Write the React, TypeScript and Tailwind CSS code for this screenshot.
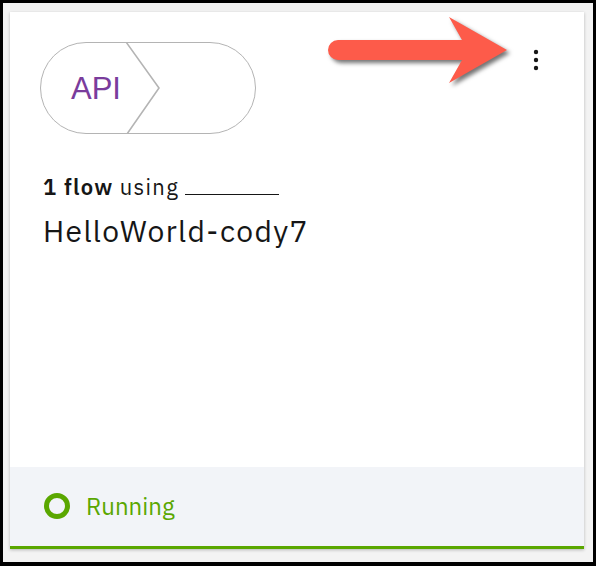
const font = { fontFamily: '"IBM Plex Sans", "Noto Sans", "Open Sans", sans-serif' };

function Kebab() {
  return (
    <svg width="6" height="22" viewBox="0 0 6 22" className="block">
      <circle cx="3" cy="3" r="2.2" fill="#161616" />
      <circle cx="3" cy="11" r="2.2" fill="#161616" />
      <circle cx="3" cy="19" r="2.2" fill="#161616" />
    </svg>
  );
}

function ApiPill() {
  return (
    <div className="relative w-[216px] h-[92px] rounded-full border-[1.5px] border-[#b4b4b4] flex items-center">
      <span
        className="pl-[30px] text-[31px] leading-none text-[#7a3c9c]"
        style={{ fontFamily: '"Liberation Sans", Arial, sans-serif' }}
      >
        API
      </span>
      <svg className="absolute left-[85px] top-[-1px]" width="36" height="92" viewBox="0 0 36 92">
        <polyline points="0,0 33,46 1,92" fill="none" stroke="#b4b4b4" strokeWidth="1.6" />
      </svg>
    </div>
  );
}

function Arrow() {
  return (
    <svg
      className="absolute left-[317px] top-[9px]"
      width="200"
      height="82"
      viewBox="320 12 200 82"
      style={{ filter: 'drop-shadow(3px 3px 2px rgba(0,0,0,0.55))' }}
    >
      <path
        d="M338 40 L462 40 L449 17 L507 50 L449 83 L462 60 L338 60 A10 10 0 0 1 338 40 Z"
        fill="#fd5b4a"
      />
    </svg>
  );
}

export default function App() {
  return (
    <div className="w-[596px] h-[566px] bg-black pt-[3px] pl-[3px] pr-[3px] pb-[4px]">
      <div className="relative h-full bg-[#f3f3f3] pl-[7px] pt-[9px] pr-[9px] pb-[13px]">
        <div className="h-full bg-white flex flex-col shadow-[0_1px_3px_rgba(0,0,0,0.25)]" style={font}>
          <div className="flex justify-between pl-[30px] pt-[30px] pr-[45px]">
            <ApiPill />
            <div className="pt-[7px]">
              <Kebab />
            </div>
          </div>
          <div className="pl-[33px] pt-[40px] text-[#161616]">
            <div className="flex items-end text-[22px] leading-[26px] tracking-[0.06em]">
              <span className="font-semibold">1 flow</span>
              <span className="ml-[6px]">using</span>
              <span className="ml-[6px] mb-[5px] w-[94px] border-b-[1.5px] border-[#161616]" />
            </div>
            <div className="mt-[13px] text-[30px] leading-[36px] tracking-[0.045em]">HelloWorld-cody7</div>
          </div>
          <div className="flex-1" />
          <div className="h-[82px] bg-[#f2f4f8] border-b-[3px] border-[#5aa700] flex items-center pl-[34px] pb-[2px]">
            <span className="w-[26px] h-[26px] rounded-full border-[5px] border-[#5aa700]" />
            <span className="ml-[16px] text-[24px] leading-none text-[#5aa700]">Running</span>
          </div>
        </div>
        <Arrow />
      </div>
    </div>
  );
}
